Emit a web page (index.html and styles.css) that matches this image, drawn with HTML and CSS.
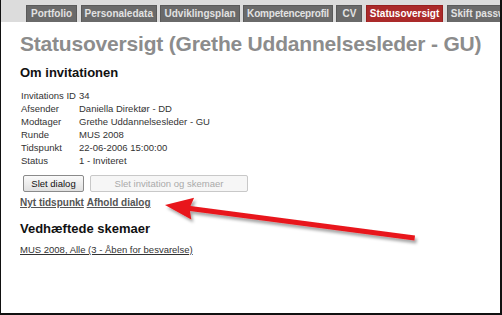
FILE: index.html
```html
<!DOCTYPE html>
<html lang="da">
<head>
<meta charset="utf-8">
<title>Statusoversigt</title>
<link rel="stylesheet" href="styles.css">
</head>
<body>
<div class="frame">
  <nav class="tabbar">
    <span class="tab wide-pad">Portfolio</span>
    <span class="tab">Personaledata</span>
    <span class="tab">Udviklingsplan</span>
    <span class="tab tight">Kompetenceprofil</span>
    <span class="tab cv">CV</span>
    <span class="tab active">Statusoversigt</span>
    <span class="tab">Skift password</span>
  </nav>
  <main class="content">
    <h1 class="title">Statusoversigt (Grethe Uddannelsesleder - GU)</h1>
    <h2 class="section">Om invitationen</h2>
    <div class="info">
      <span>Invitations ID</span><span>34</span>
      <span>Afsender</span><span>Daniella Direktør - DD</span>
      <span>Modtager</span><span>Grethe Uddannelsesleder - GU</span>
      <span>Runde</span><span>MUS 2008</span>
      <span>Tidspunkt</span><span>22-06-2006 15:00:00</span>
      <span>Status</span><span>1 - Inviteret</span>
    </div>
    <div class="buttons">
      <button class="btn">Slet dialog</button>
      <button class="btn wide" disabled>Slet invitation og skemaer</button>
    </div>
    <div class="actions">
      <a href="#" class="action">Nyt tidspunkt</a> <a href="#" class="action">Afhold dialog</a>
    </div>
    <h2 class="section second">Vedhæftede skemaer</h2>
    <a href="#" class="form-link">MUS 2008, Alle (3 - Åben for besvarelse)</a>
  </main>
  <svg class="arrow" width="262" height="54" viewBox="0 0 262 54">
    <defs>
      <filter id="sh" x="-10%" y="-40%" width="120%" height="180%">
        <feGaussianBlur in="SourceAlpha" stdDeviation="1.5" result="blur"/>
        <feOffset in="blur" dx="2" dy="3" result="off"/>
        <feFlood flood-color="#000" flood-opacity="0.35"/>
        <feComposite in2="off" operator="in" result="shadow"/>
        <feMerge><feMergeNode in="shadow"/><feMergeNode in="SourceGraphic"/></feMerge>
      </filter>
    </defs>
    <g filter="url(#sh)" fill="#e8161b">
      <polygon points="3,11 32.1,3.8 28.5,12 253,41.5 252.4,46.5 28,17 29.3,25.6"/>
    </g>
  </svg>
</div>
</body>
</html>
```

FILE: styles.css
```css
html, body {
  margin: 0;
  padding: 0;
  background: #fff;
}
body {
  font-family: "Liberation Sans", Arial, sans-serif;
  color: #222;
}
.frame {
  position: relative;
  width: 502px;
  height: 315px;
  box-sizing: border-box;
  border-left: 1px solid #111;
  border-right: 2px solid #111;
  border-bottom: 2px solid #111;
  overflow: hidden;
}
.tabbar {
  height: 22px;
  background: #dcdcdc;
  display: flex;
  align-items: flex-end;
  gap: 3.5px;
  padding-left: 25px;
  white-space: nowrap;
  overflow: hidden;
}
.tab {
  flex: none;
  height: 16px;
  line-height: 16px;
  padding: 0 3px;
  background: #6a6a6a;
  color: #e2e2e2;
  font-size: 10px;
  font-weight: bold;
  border: 1px solid #5a5a5a;
  border-bottom: none;
}
.tab.wide-pad {
  padding: 0 4px;
}
.tab.tight {
  letter-spacing: -0.2px;
}
.tab.cv {
  padding: 0 5px;
}
.tab.active {
  background: #ab2a2a;
  border-color: #962020;
  color: #fff;
}
.content {
  padding: 9px 0 0 19px;
}
.title {
  margin: 0;
  font-size: 21px;
  font-weight: bold;
  color: #8c8c8c;
  line-height: 26px;
  letter-spacing: -0.2px;
}
.section {
  margin: 7px 0 0;
  font-size: 13px;
  font-weight: bold;
  color: #111;
  line-height: 18px;
}
.info {
  display: grid;
  grid-template-columns: 58px auto;
  margin-top: 7px;
  font-size: 9.5px;
  line-height: 13px;
  color: #333;
  padding-left: 1px;
  white-space: nowrap;
}
.buttons {
  display: flex;
  gap: 6px;
  margin-top: 8px;
  padding-left: 3px;
}
.btn {
  font-family: "Liberation Sans", Arial, sans-serif;
  font-size: 9.5px;
  height: 17px;
  width: 61px;
  padding: 0;
  border: 1px solid #8a8a8a;
  border-radius: 2px;
  background: linear-gradient(#fafafa, #e0e0e0);
  color: #111;
  line-height: 15px;
}
.btn.wide {
  width: 158px;
  color: #aaa;
  border-color: #c8c8c8;
  background: #f6f6f6;
}
.actions {
  margin-top: 4px;
  font-size: 10px;
  line-height: 14px;
}
.action {
  color: #555;
  font-weight: bold;
  text-decoration: underline;
}
.second {
  margin-top: 10px;
}
.form-link {
  display: inline-block;
  margin-top: 6px;
  font-size: 9.5px;
  color: #333;
  text-decoration: underline;
}
.arrow {
  position: absolute;
  left: 161px;
  top: 194px;
}
```
